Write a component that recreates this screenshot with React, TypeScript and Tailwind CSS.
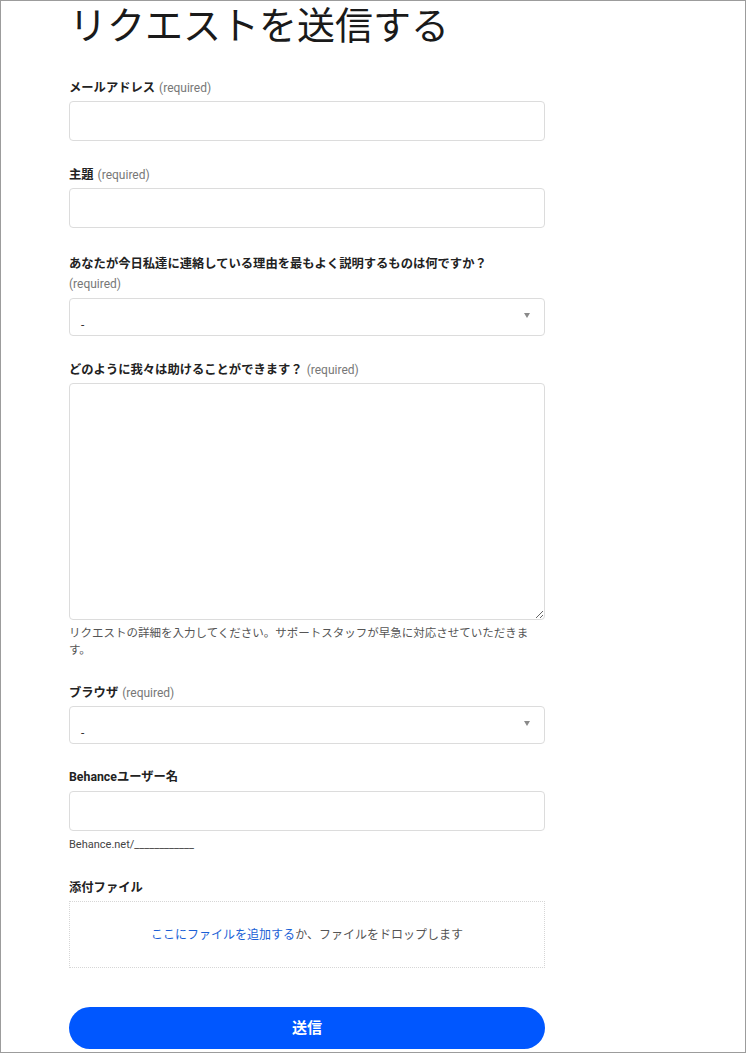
const font = { fontFamily: "Roboto, 'Noto Sans CJK JP', sans-serif" };

const Label = ({ text, required, breakReq }: { text: string; required?: boolean; breakReq?: boolean }) => (
  <div className="text-[12.3px] leading-[20px] text-[#222]">
    <span className="font-bold">{text}</span>
    {required && (
      <span className={`text-[12px] text-[#777] ${breakReq ? 'block' : 'ml-1'}`}>(required)</span>
    )}
  </div>
);

const Input = () => (
  <input className="mt-[3px] block h-10 w-full rounded-[4px] border border-[#dcdcdc] bg-white px-3 outline-none" />
);

const Select = () => (
  <div className="mt-[3px] relative h-[38px] w-full rounded-[4px] border border-[#dcdcdc] bg-white">
    <span className="absolute left-[11px] top-[18px] text-[12px] leading-[16px] text-[#333]">-</span>
    <span className="absolute right-[14px] top-[14px] h-0 w-0 border-l-[3px] border-r-[3px] border-t-[5px] border-l-transparent border-r-transparent border-t-[#8a8a8a]" />
  </div>
);

export default function App() {
  return (
    <div
      className="box-border h-[1053px] w-[746px] overflow-hidden border border-[#9c9c9c] bg-white pl-[68px]"
      style={font}
    >
      <div className="w-[476px]">
        <h1 className="pt-[3px] text-[38px] leading-[44px] font-normal text-[#1a1a1a]">リクエストを送信する</h1>

        <div className="mt-[30px]">
          <Label text="メールアドレス" required />
          <Input />
        </div>

        <div className="mt-[24px]">
          <Label text="主題" required />
          <Input />
        </div>

        <div className="mt-[26px]">
          <Label text="あなたが今日私達に連絡している理由を最もよく説明するものは何ですか？" required breakReq />
          <div className="pt-px">
            <Select />
          </div>
        </div>

        <div className="mt-[24px]">
          <Label text="どのように我々は助けることができます？" required />
          <textarea className="mt-[3px] block h-[237px] w-full resize-y rounded-[4px] border border-[#dcdcdc] bg-white p-3 outline-none" />
          <p className="mt-[5px] text-[11.5px] leading-[17px] text-[#555]">
            リクエストの詳細を入力してください。サポートスタッフが早急に対応させていただきます。
          </p>
        </div>

        <div className="mt-[24px]">
          <Label text="ブラウザ" required />
          <Select />
        </div>

        <div className="mt-[23px]">
          <Label text="Behanceユーザー名" />
          <div className="pt-px">
            <Input />
          </div>
          <p className="mt-[6px] text-[11px] leading-[16px] text-[#444]">Behance.net/____________</p>
        </div>

        <div className="mt-[25px]">
          <Label text="添付ファイル" />
          <div className="mt-[3px] flex h-[67px] items-center justify-center border border-dotted border-[#d6d6d6] text-[12px] text-[#555]">
            <span>
              <a className="text-[#1a5fd6]">ここにファイルを追加する</a>か、ファイルをドロップします
            </span>
          </div>
        </div>

        <button className="mt-[39px] flex h-[42px] w-full items-center justify-center rounded-full bg-[#0057ff] text-[15px] font-bold text-white">
          送信
        </button>
      </div>
    </div>
  );
}
